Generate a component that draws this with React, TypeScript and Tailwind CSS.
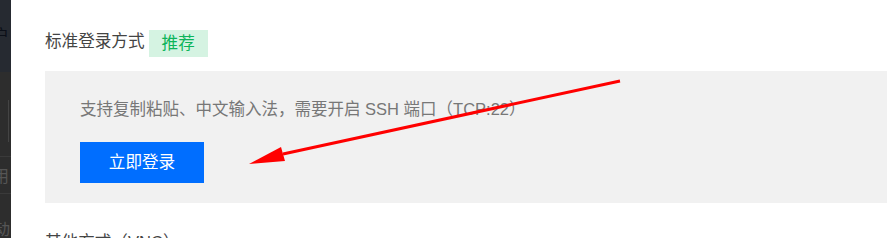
import React from "react";

export default function App() {
  return (
    <div
      className="relative w-[887px] h-[238px] overflow-hidden bg-white flex"
      style={{ fontFamily: '"Liberation Sans", "Noto Sans CJK SC", sans-serif' }}
    >
      {/* left dark strip */}
      <div className="w-[11px] shrink-0 flex flex-col overflow-hidden bg-[#2d2d2d]">
        <div className="h-[72px] shrink-0 bg-[#262a31] flex flex-col">
          <div className="mt-[26px] -ml-[7px] text-[16px] leading-[20px] text-[#0b0f18]">户</div>
        </div>
        <div className="mt-[28px] h-[42px] shrink-0 ml-[8px] border-l border-[#444]" />
        <div className="mt-[14px] border-t border-[#3a3a3a]" />
        <div className="mt-[10px] -ml-[7px] text-[16px] leading-[20px] text-[#555]">用</div>
        <div className="mt-[6px] border-t border-[#3a3a3a]" />
        <div className="mt-[26px] -ml-[6px] text-[16px] leading-[20px] text-[#555]">动</div>
      </div>

      {/* main */}
      <div className="flex-1 pl-[34px] flex flex-col">
        <div className="mt-[30px] shrink-0 flex items-start h-[27px]">
          <span className="text-[16.6px] leading-[24px] text-[#444]">标准登录方式</span>
          <span className="ml-[4px] h-[27px] px-[13px] flex items-center bg-[#d5f3e2] text-[#0cb45a] text-[16.6px] leading-[24px]">
            推荐
          </span>
        </div>

        <div className="mt-[14px] shrink-0 h-[132px] bg-[#f1f1f1] pl-[35px] pt-[26px] flex flex-col items-start">
          <p className="text-[16.5px] leading-[24px] text-[#777] whitespace-nowrap">
            支持复制粘贴、中文输入法，需要开启 SSH 端口（TCP:22）
          </p>
          <button className="mt-[21px] shrink-0 w-[124px] h-[41px] bg-[#006eff] text-white text-[16.6px] leading-[24px] flex items-center justify-center">
            立即登录
          </button>
        </div>

        <div className="mt-[28px] shrink-0 text-[16.6px] leading-[24px] text-[#444] whitespace-nowrap">
          其他方式（VNC）
        </div>
      </div>

      {/* red annotation arrow */}
      <svg
        className="absolute left-0 top-0 pointer-events-none"
        width="887"
        height="238"
        viewBox="0 0 887 238"
      >
        <line x1="283" y1="154" x2="620" y2="81" stroke="#ff0000" strokeWidth="3" />
        <polygon points="249,164 281,147 285,161" fill="#ff0000" />
      </svg>
    </div>
  );
}
